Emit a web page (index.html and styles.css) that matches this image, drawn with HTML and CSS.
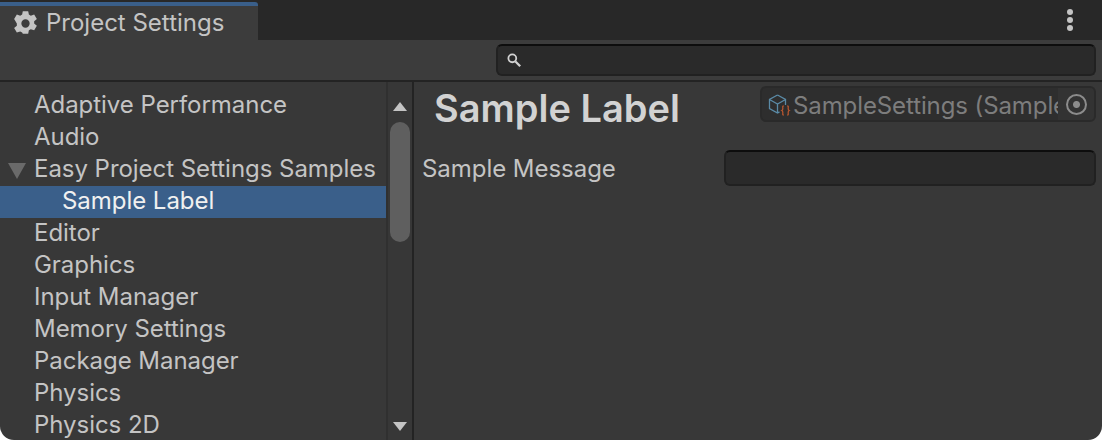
FILE: index.html
```html
<!DOCTYPE html>
<html lang="en">
<head>
    <meta charset="UTF-8">
    <meta name="viewport" content="width=device-width, initial-scale=1.0">
    <title>Project Settings</title>
    <link rel="stylesheet" href="styles.css">
</head>
<body>

<div class="window">

  <!-- Tab strip -->
  <div class="tabbar">
    <div class="tab">
      <svg class="gear" width="27" height="27" viewBox="0 0 24 24">
        <path fill="#c4c4c4" fill-rule="evenodd" d="M9.600 1h4.800l.6 3.100 1.700.9 3-1.100 2.400 4.100-2.400 2.100v1.800l2.400 2.100-2.400 4.100-3-1.100-1.700.9-.6 3.100H9.600L9 19.900l-1.700-.9-3 1.100-2.400-4.100 2.400-2.100v-1.800L1.900 8l2.400-4.100 3 1.100L9 4.100zM12 8.300a3.700 3.700 0 1 0 0 7.400 3.700 3.700 0 0 0 0-7.400z"/>
      </svg>
      <span class="tab-title">Project Settings</span>
    </div>
    <div class="tab-menu">
      <span class="dot"></span>
      <span class="dot"></span>
      <span class="dot"></span>
    </div>
  </div>

  <!-- Search -->
  <div class="toolbar">
    <div class="search">
      <svg width="18" height="18" viewBox="0 0 16 16">
        <circle cx="6.500" cy="6.500" r="3.500" fill="none" stroke="#d2d2d2" stroke-width="1.600"/>
        <path d="M9.300 9.300l4.200 4.200" stroke="#d2d2d2" stroke-width="2"/>
      </svg>
    </div>
  </div>

  <div class="main">

    <!-- Settings tree -->
    <div class="sidebar">
      <div class="tree">
        <div class="item">Adaptive Performance</div>
        <div class="item">Audio</div>
        <div class="item expanded"><span class="arrow"></span>Easy Project Settings Samples</div>
        <div class="item child selected">Sample Label</div>
        <div class="item">Editor</div>
        <div class="item">Graphics</div>
        <div class="item">Input Manager</div>
        <div class="item">Memory Settings</div>
        <div class="item">Package Manager</div>
        <div class="item">Physics</div>
        <div class="item">Physics 2D</div>
      </div>
      <div class="scrollbar">
        <span class="scroll-up"></span>
        <span class="thumb"></span>
        <span class="scroll-down"></span>
      </div>
    </div>

    <!-- Settings panel -->
    <div class="content">
      <div class="content-head">
        <h1>Sample Label</h1>
        <div class="object-field">
          <svg class="script-icon" width="25" height="26" viewBox="0 0 25 26">
            <path d="M9.500 4l8 4.500v5.500M9.500 4l-8 4.500v9l8 4.500 2-1.100M1.500 8.500l8 4.500 8-4.500M9.500 13v9" fill="none" stroke="#5a8aa6" stroke-width="1.300"/>
            <path d="M15.800 15c-1.500 0-1 .8-1 2.700 0 1-.4 1.500-1 1.800.6.300 1 .8 1 1.800 0 1.900-.5 2.700 1 2.700M19.200 15c1.500 0 1 .8 1 2.700 0 1 .4 1.500 1 1.800-.6.300-1 .8-1 1.800 0 1.900.5 2.700-1 2.700" fill="none" stroke="#b5562f" stroke-width="1.300"/>
          </svg>
          <span class="object-name">SampleSettings (Sample</span>
          <span class="object-pick"><span class="pick-ring"></span></span>
        </div>
      </div>
      <div class="row">
        <label class="row-label" for="message">Sample Message</label>
        <input class="row-input" id="message" type="text">
      </div>
    </div>

  </div>
</div>

</body>
</html>
```

FILE: styles.css
```css
* {
    box-sizing: border-box;
}

html, body {
    margin: 0;
    height: 100%;
    background-color: #ffffff;
}

body {
    font-family: Inter, "Liberation Sans", sans-serif;
    font-size: 24px;
    letter-spacing: -0.04px;
    color: #c4c4c4;
    overflow: hidden;
}

.window {
    width: 1102px;
    height: 440px;
    display: flex;
    flex-direction: column;
    background-color: #383838;
    border-radius: 0 0 14px 14px;
    overflow: hidden;
}

/* Tab strip */
.tabbar {
    height: 40px;
    flex: none;
    display: flex;
    justify-content: space-between;
    background-color: #282828;
}

.tab {
    width: 258px;
    margin-top: 2px;
    display: flex;
    align-items: center;
    padding: 0 0 0 12px;
    gap: 7px;
    background-color: #3c3c3c;
    border-top: 4px solid #3a5f8a;
    border-top-right-radius: 3px;
}

.gear {
    flex: none;
}

.tab-title {
    line-height: 28px;
    letter-spacing: 0;
}

.tab-menu {
    width: 64px;
    display: flex;
    flex-direction: column;
    align-items: center;
    justify-content: center;
    gap: 2px;
}

.dot {
    width: 6px;
    height: 6px;
    border-radius: 50%;
    background-color: #c4c4c4;
}

/* Search */
.toolbar {
    height: 42px;
    flex: none;
    display: flex;
    justify-content: flex-end;
    align-items: center;
    padding: 0 6px 0 0;
    background-color: #3c3c3c;
    border-bottom: 2px solid #232323;
}

.search {
    width: 600px;
    height: 32px;
    display: flex;
    align-items: center;
    padding-left: 7px;
    background-color: #2a2a2a;
    border: 2px solid #212121;
    border-top-color: #0d0d0d;
    border-radius: 6px;
}

/* Main area */
.main {
    flex: 1;
    display: flex;
    min-height: 0;
}

.sidebar {
    width: 414px;
    flex: none;
    display: flex;
    border-right: 2px solid #232323;
}

.tree {
    flex: 1;
    padding-top: 8px;
}

.item {
    height: 32px;
    line-height: 30px;
    padding-left: 34px;
    white-space: nowrap;
    position: relative;
}

.item.child {
    padding-left: 62px;
}

.item.selected {
    background-color: #3a5f8a;
    color: #f0f0f0;
}

.arrow {
    position: absolute;
    left: 8px;
    top: 9px;
    border-left: 9px solid transparent;
    border-right: 9px solid transparent;
    border-top: 16px solid #6a6a6a;
}

.scrollbar {
    width: 26px;
    flex: none;
    position: relative;
    background-color: #373737;
    border-left: 2px solid #303030;
}

.scroll-up, .scroll-down {
    position: absolute;
    left: 5px;
    border-left: 7px solid transparent;
    border-right: 7px solid transparent;
}

.scroll-up {
    top: 20px;
    border-bottom: 9px solid #c4c4c4;
}

.scroll-down {
    bottom: 9px;
    border-top: 9px solid #c4c4c4;
}

.thumb {
    position: absolute;
    left: 2px;
    top: 40px;
    width: 20px;
    height: 120px;
    border-radius: 10px;
    background-color: #5f5f5f;
}

/* Content */
.content {
    flex: 1;
    padding: 4px 6px 0 8px;
}

.content-head {
    height: 64px;
    display: flex;
    justify-content: space-between;
    align-items: flex-start;
    padding-left: 12px;
}

h1 {
    margin: 0;
    font-size: 38px;
    line-height: 44px;
    font-weight: 600;
    letter-spacing: 0;
    color: #d2d2d2;
}

.object-field {
    width: 336px;
    height: 36px;
    display: flex;
    align-items: center;
    padding-left: 6px;
    background-color: #2e2e2e;
    border: 2px solid #2a2a2a;
    border-radius: 6px;
    overflow: hidden;
}

.script-icon {
    flex: none;
}

.object-name {
    width: 265px;
    flex: none;
    overflow: hidden;
    white-space: nowrap;
    padding-top: 3px;
    line-height: 29px;
    letter-spacing: -0.1px;
    color: #7d7d7d;
}

.object-pick {
    flex: 1;
    height: 32px;
    display: flex;
    align-items: center;
    justify-content: center;
    background-color: #333333;
}

.pick-ring {
    width: 21px;
    height: 21px;
    border-radius: 50%;
    border: 2px solid #8c8c8c;
    background: radial-gradient(circle, #8c8c8c 0 3px, transparent 4px);
}

.row {
    display: flex;
    align-items: center;
    height: 36px;
}

.row-label {
    width: 302px;
    flex: none;
    padding-top: 2px;
    line-height: 34px;
}

.row-input {
    flex: 1;
    height: 36px;
    background-color: #2a2a2a;
    border: 2px solid #212121;
    border-top-color: #0d0d0d;
    border-radius: 6px;
    outline: none;
}
```
